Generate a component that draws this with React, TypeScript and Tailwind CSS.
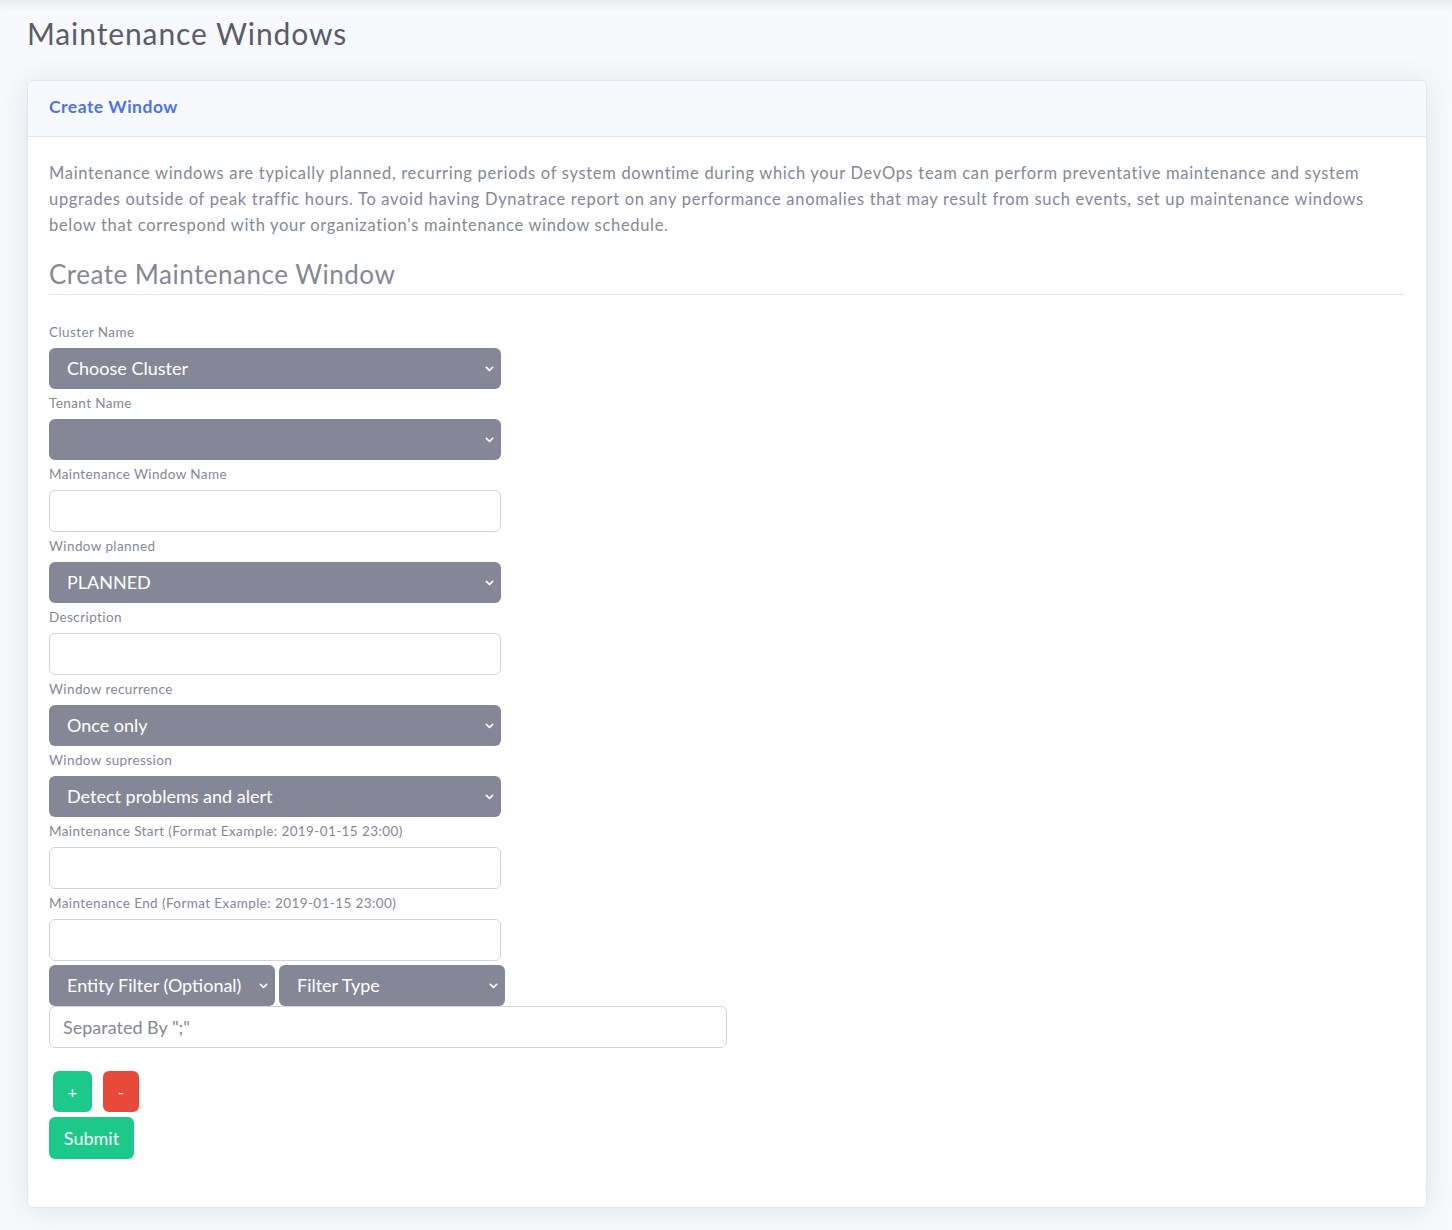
import React from 'react';

const font = { fontFamily: 'Lato, "Open Sans", sans-serif' };

function Chevron() {
  return (
    <svg viewBox="0 0 10 6" className="w-[9px] h-[6px] pointer-events-none" fill="none" stroke="white" strokeWidth="1.8" strokeLinecap="round" strokeLinejoin="round">
      <path d="M1.5 1.2 L5 4.6 L8.5 1.2" />
    </svg>
  );
}

function Select({ value, width = 'w-[452px]' }: { value: string; width?: string }) {
  return (
    <div className={`relative ${width} h-[41px] shrink-0`}>
      <select
        defaultValue={value}
        className="appearance-none w-full h-full rounded-[6px] bg-[#858796] text-white text-[18px] pl-[18px] pr-8 outline-none"
        style={font}
      >
        <option value={value}>{value}</option>
      </select>
      <span className="absolute right-[7px] top-[18px] flex">
        <Chevron />
      </span>
    </div>
  );
}

function TextInput({ placeholder = '', width = 'w-[452px]' }: { placeholder?: string; width?: string }) {
  return (
    <input
      type="text"
      placeholder={placeholder}
      className={`${width} h-[42px] rounded-[6px] border border-[#d1d3e2] bg-white px-[13px] text-[18px] text-[#6e707e] placeholder:text-[#858796] outline-none`}
      style={font}
    />
  );
}

function Label({ children, first = false }: { children: React.ReactNode; first?: boolean }) {
  return (
    <label className={`block text-[13.5px] leading-[20px] tracking-[0.4px] text-[#858796] mb-[6px] ${first ? '' : 'mt-[4px]'}`}>
      {children}
    </label>
  );
}

export default function App() {
  return (
    <div className="min-h-[1230px] bg-[#f8f9fc] text-[#858796] shadow-[inset_0_10px_12px_-10px_rgba(58,59,69,0.18)]" style={font}>
      <div className="pl-[27px] pr-[25px] pt-[13px] pb-[23px]">
        <h1 className="text-[30px] leading-[40px] text-[#5a5c69] mb-[27px] tracking-[0.9px]">Maintenance Windows</h1>

        {/* Card */}
        <div className="bg-white rounded-[6px] border border-[#e3e6f0] shadow-[0_2px_28px_0_rgba(58,59,69,0.12)]">
          <div className="h-[56px] flex items-center px-[21px] bg-[#f8f9fc] border-b border-[#e3e6f0] rounded-t-[6px]">
            <h6 className="text-[17.5px] font-bold text-[#4e73df] tracking-[0.5px] -mt-[3px]">Create Window</h6>
          </div>

          <div className="px-[21px] pt-[23px] pb-[48px]">
            <p className="text-[16.5px] leading-[26px] tracking-[0.68px] text-[#858796] pr-[20px]">
              Maintenance windows are typically planned, recurring periods of system downtime during which your DevOps team can perform preventative maintenance and system upgrades outside of peak traffic hours. To avoid having Dynatrace report on any performance anomalies that may result from such events, set up maintenance windows below that correspond with your organization's maintenance window schedule.
            </p>

            <h3 className="mt-[17px] text-[26px] leading-[38px] text-[#858796] pb-[1px] border-b border-[#e3e6f0] tracking-[0.5px]">
              Create Maintenance Window
            </h3>

            <form className="mt-[27px]" onSubmit={e => e.preventDefault()}>
              <Label first>Cluster Name</Label>
              <Select value="Choose Cluster" />
              <Label>Tenant Name</Label>
              <Select value="" />
              <Label>Maintenance Window Name</Label>
              <TextInput />
              <Label>Window planned</Label>
              <Select value="PLANNED" />
              <Label>Description</Label>
              <TextInput />
              <Label>Window recurrence</Label>
              <Select value="Once only" />
              <Label>Window supression</Label>
              <Select value="Detect problems and alert" />
              <Label>Maintenance Start (Format Example: 2019-01-15 23:00)</Label>
              <TextInput />
              <Label>Maintenance End (Format Example: 2019-01-15 23:00)</Label>
              <TextInput />

              <div className="flex gap-[4px] mt-[4px]">
                <Select value="Entity Filter (Optional)" width="w-[226px]" />
                <Select value="Filter Type" width="w-[226px]" />
              </div>
              <TextInput placeholder={'Separated By ";"'} width="w-[678px] block" />

              <div className="flex gap-[11px] mt-[23px] ml-[4px]">
                <button type="button" className="w-[39px] h-[41px] rounded-[6px] bg-[#1cc88a] text-white text-[16px]">+</button>
                <button type="button" className="w-[36px] h-[41px] rounded-[6px] bg-[#e74a3b] text-white text-[16px]">-</button>
              </div>
              <button type="submit" className="mt-[5px] w-[85px] h-[42px] rounded-[6px] bg-[#1cc88a] text-white text-[18px]">Submit</button>
            </form>
          </div>
        </div>
      </div>
    </div>
  );
}
